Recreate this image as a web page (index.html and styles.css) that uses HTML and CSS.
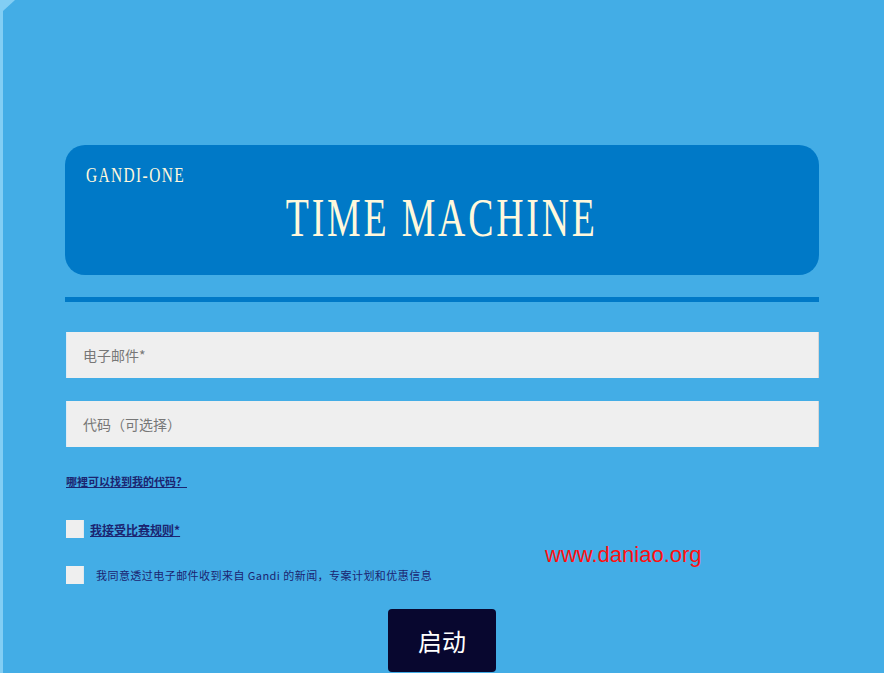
FILE: index.html
```html
<!DOCTYPE html>
<html lang="zh">
<head>
<meta charset="utf-8">
<title>TIME MACHINE</title>
<link rel="stylesheet" href="styles.css">
</head>
<body>
<div class="page">
  <div class="wrap">
    <header class="hero">
      <div class="brand">GANDI-ONE</div>
      <h1 class="title"><span class="squeeze">TIME MACHINE</span></h1>
    </header>
    <div class="rule"></div>
    <form class="form">
      <input class="field" type="text" placeholder="电子邮件*">
      <input class="field field-second" type="text" placeholder="代码（可选择）">
      <a class="help" href="#">哪裡可以找到我的代码？</a>
      <label class="check check-first"><span class="box"></span><span class="check-text strong">我接受比赛规则*</span></label>
      <label class="check check-second"><span class="box"></span><span class="check-text plain">我同意透过电子邮件收到来自 Gandi 的新闻，专案计划和优惠信息</span></label>
      <div class="actions"><button class="start" type="button">启动</button></div>
    </form>
    <div class="watermark">www.daniao.org</div>
  </div>
</div>
</body>
</html>
```
FILE: styles.css
```css
html, body {
  margin: 0;
  padding: 0;
  background: #43ade6;
}
body {
  width: 884px;
  height: 673px;
  overflow: hidden;
  font-family: "Noto Sans CJK SC", sans-serif;
}
.page {
  position: relative;
  height: 673px;
  border-left: 3px solid #82cef4;
  box-sizing: border-box;
}
.page::before {
  content: "";
  position: absolute;
  left: -3px;
  top: 0;
  width: 15px;
  height: 11px;
  background: #82cef4;
  clip-path: polygon(0 0, 100% 0, 20% 100%, 0 100%);
}
.wrap {
  position: relative;
  width: 754px;
  margin-left: 62px;
  padding-top: 145px;
}
.hero {
  height: 130px;
  box-sizing: border-box;
  background: #0079c7;
  border-radius: 20px;
  padding: 19px 21px 0;
  color: #fff8dc;
  font-family: "Liberation Serif", serif;
}
.brand {
  font-size: 22px;
  line-height: 22px;
  letter-spacing: 2px;
  transform: scaleX(0.7);
  transform-origin: left center;
  white-space: nowrap;
}
.title {
  margin: 5px 0 0;
  font-weight: normal;
  font-size: 54px;
  line-height: 54px;
  text-align: center;
  margin-left: -21px;
  margin-right: -21px;
}
.squeeze {
  display: inline-block;
  letter-spacing: 4px;
  transform: scaleX(0.7);
  white-space: nowrap;
}
.rule {
  height: 5px;
  margin-top: 22px;
  background: #0079c7;
}
.form {
  display: flex;
  flex-direction: column;
  margin-top: 30px;
}
.field {
  display: block;
  width: 753px;
  height: 46px;
  margin: 0 0 0 1px;
  box-sizing: border-box;
  border: 0;
  border-left: 1px solid #dcebf5;
  border-right: 1px solid #d6d6d6;
  background: #efefef;
  padding: 0 0 0 16px;
  font-family: "Noto Sans CJK SC", sans-serif;
  font-size: 14px;
  color: #555;
  outline: none;
}
.field::placeholder {
  color: #777;
}
.field-second {
  margin-top: 23px;
}
.help {
  align-self: flex-start;
  margin: 27px 0 0 1px;
  font-size: 11px;
  line-height: 14px;
  font-weight: bold;
  color: #1b2470;
  text-decoration: underline;
}
.check {
  display: flex;
  align-items: center;
  margin-left: 1px;
  height: 18px;
}
.check-first {
  margin-top: 32px;
}
.check-second {
  margin-top: 28px;
}
.box {
  width: 18px;
  height: 18px;
  flex: none;
  background: #efefef;
  border-right: 1px solid #dfe9f0;
  box-sizing: border-box;
}
.check-text {
  color: #1b2470;
  white-space: nowrap;
}
.strong {
  margin-left: 6px;
  font-size: 12px;
  font-weight: bold;
  text-decoration: underline;
}
.plain {
  margin-left: 12px;
  font-size: 11px;
  letter-spacing: 0.45px;
}
.actions {
  display: flex;
  justify-content: center;
  margin-top: 25px;
}
.start {
  width: 108px;
  height: 63px;
  border: 0;
  border-radius: 4px;
  background: #08072f;
  color: #fff;
  font-family: "Noto Sans CJK SC", sans-serif;
  font-size: 24px;
  padding: 0;
  cursor: pointer;
}
.watermark {
  position: absolute;
  left: 480px;
  top: 544px;
  font-family: "Liberation Sans", Arial, sans-serif;
  font-size: 22px;
  line-height: 22px;
  color: #ff1010;
}
```
